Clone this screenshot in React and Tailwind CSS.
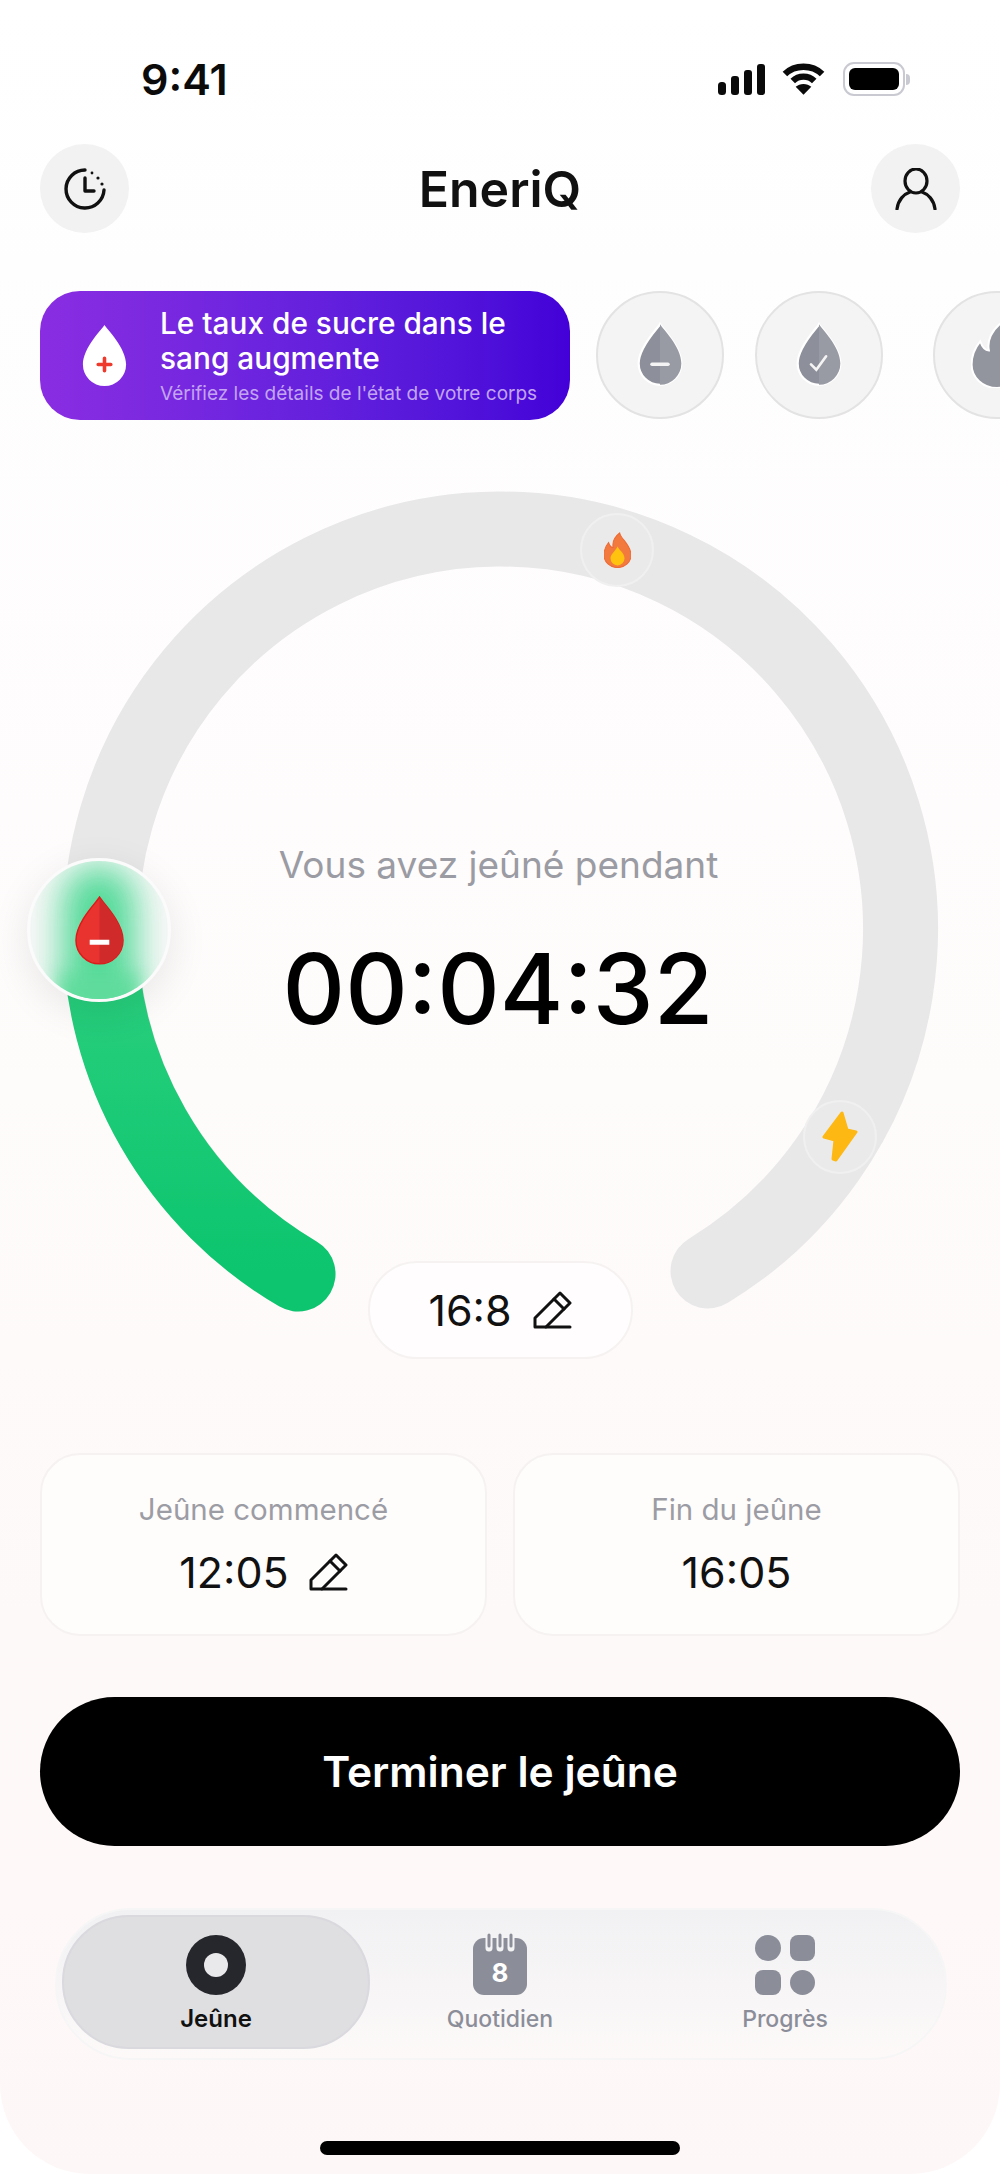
import React from 'react';

const DROP = 'M50 2 C54 10 98 52 98 90 A48 48 0 0 1 2 90 C2 52 46 10 50 2 Z';
const FLAME = 'M58 2 C62 24 100 46 100 84 A50 46 0 0 1 0 84 C0 66 7 50 17 38 C21 50 27 56 34 56 C30 36 40 16 58 2 Z';

const Pencil = ({ className }) => (
    <svg viewBox="0 0 40 38" fill="none" stroke="#111" strokeWidth="3" strokeLinejoin="round" strokeLinecap="round" className={className}>
        <path d="M3 36 V27 L28 2 L38 12 L14 36 H3 Z" />
        <path d="M22 8 L32 18" />
        <path d="M14 36 H38" />
    </svg>
);

const SplitDrop = ({ left, right, className, children }) => (
    <svg viewBox="-4 -2 108 146" className={className}>
        <path d={DROP} fill={left} stroke="#fff" strokeWidth="5" />
        <path d="M50 2 C54 10 98 52 98 90 A48 48 0 0 1 50 138 Z" fill={right} />
        {children}
    </svg>
);

const StatusBar = () => (
    <div className="flex h-[144px] items-start justify-between pl-[141px] pr-[90px] pt-[52px]">
        <span className="text-[43px] font-semibold leading-[54px] text-[#0b0b0b]">9:41</span>
        <div className="mt-[10px] flex items-center">
            <svg viewBox="0 0 48 31" className="h-[31px] w-[48px]" fill="#0a0a0a">
                <rect x="0" y="18" width="8" height="13" rx="3.5" />
                <rect x="13" y="12" width="8" height="19" rx="3" />
                <rect x="26" y="6" width="8" height="25" rx="3" />
                <rect x="39" y="0" width="8" height="31" rx="3" />
            </svg>
            <svg viewBox="0 0 44 32" className="ml-[16px] h-[32px] w-[43px]" fill="none" stroke="#0a0a0a" strokeWidth="6.5">
                <path d="M3 11 C13 1 31 1 41 11" />
                <path d="M11 18 C17 12 27 12 33 18" />
                <path d="M22 32 L14 24 C18 20 26 20 30 24 Z" fill="#0a0a0a" stroke="none" />
            </svg>
            <div className="ml-[18px] flex h-[34px] w-[62px] items-center justify-center rounded-[11px] border-[2px] border-[#c9c9d2]">
                <div className="h-[22px] w-[50px] rounded-[6px] bg-black" />
            </div>
            <div className="ml-[1px] h-[11px] w-[4px] rounded-r-full bg-[#c9c9d2]" />
        </div>
    </div>
);

const Header = () => (
    <div className="flex h-[89px] items-center justify-between px-[40px]">
        <div className="flex h-[89px] w-[89px] items-center justify-center rounded-full bg-[#f3f2f2]">
            <svg viewBox="0 0 44 44" className="h-[44px] w-[44px]" fill="none" stroke="#111" strokeWidth="3.4" strokeLinecap="round" strokeLinejoin="round">
                <path d="M22 3 A19 19 0 1 0 41 23" />
                <path d="M22 11 V24 H31" />
                <circle cx="29" cy="6" r="1.4" fill="#111" stroke="none" />
                <circle cx="35" cy="11" r="1.6" fill="#111" stroke="none" />
                <circle cx="39" cy="17" r="1.6" fill="#111" stroke="none" />
            </svg>
        </div>
        <span className="text-[50px] font-semibold leading-none text-[#111]">EneriQ</span>
        <div className="flex h-[89px] w-[89px] items-center justify-center rounded-full bg-[#f3f2f2]">
            <svg viewBox="0 0 42 42" className="h-[42px] w-[42px]" fill="none" stroke="#111" strokeWidth="3.2" strokeLinecap="round">
                <ellipse cx="21" cy="13" rx="11" ry="12" />
                <path d="M2 41 C3 32 9 26 15 24 M40 41 C39 32 33 26 27 24" />
            </svg>
        </div>
    </div>
);

const GrayCircle = ({ className, children }) => (
    <div className={`flex h-[128px] w-[128px] shrink-0 items-center justify-center rounded-full border-[2px] border-[#e4e3e3] bg-[#f4f4f4] ${className}`}>
        {children}
    </div>
);

const Banner = () => (
    <div className="mt-[58px] flex h-[129px] overflow-hidden pl-[40px]">
        <div className="flex h-[129px] w-[530px] shrink-0 items-center rounded-[40px] bg-gradient-to-r from-[#8a2de2] to-[#4300d8] pl-[41px]">
            <svg viewBox="0 0 100 140" className="h-[63px] w-[47px] shrink-0">
                <path d={DROP} fill="#fff" />
                <path d="M50 76 V104 M36 90 H64" stroke="#ee3a2c" strokeWidth="8" strokeLinecap="round" />
            </svg>
            <div className="ml-[32px] whitespace-nowrap text-white">
                <div className="text-[29.8px] font-medium leading-[35px]">Le taux de sucre dans le<br />sang augmente</div>
                <div className="mt-[7px] text-[19px] leading-[22px] text-[#c3a5f2]">Vérifiez les détails de l'état de votre corps</div>
            </div>
        </div>
        <GrayCircle className="ml-[26px]">
            <SplitDrop left="#8d909a" right="#989aa4" className="h-[66px] w-[48px]">
                <path d="M32 92 H68" stroke="#f4f4f4" strokeWidth="8" strokeLinecap="round" />
            </SplitDrop>
        </GrayCircle>
        <GrayCircle className="ml-[31px]">
            <SplitDrop left="#8d909a" right="#989aa4" className="h-[66px] w-[48px]">
                <path d="M32 92 L44 104 L66 74" fill="none" stroke="#f4f4f4" strokeWidth="6" strokeLinecap="round" />
            </SplitDrop>
        </GrayCircle>
        <GrayCircle className="ml-[50px]">
            <svg viewBox="0 0 100 130" className="h-[66px] w-[52px]">
                <path d={FLAME} fill="#92949e" stroke="#fff" strokeWidth="4" />
            </svg>
        </GrayCircle>
    </div>
);

const Badge = ({ className, children }) => (
    <div className={`absolute flex h-[74px] w-[74px] items-center justify-center rounded-full border-[2px] border-[#f1f0f0] bg-[#ebeaea] ${className}`}>
        {children}
    </div>
);

const Ring = () => (
    <div className="relative flex h-[940px] flex-col items-center pb-[1px]">
        <svg viewBox="0 420 1000 940" className="absolute inset-0 h-[940px] w-[1000px]" fill="none" strokeLinecap="round">
            <defs>
                <linearGradient id="greenArc" x1="0" y1="930" x2="0" y2="1274" gradientUnits="userSpaceOnUse">
                    <stop offset="0" stopColor="#2dd07f" />
                    <stop offset="1" stopColor="#0cc56e" />
                </linearGradient>
            </defs>
            <path d="M298 1274 A400 400 0 1 1 708 1271" stroke="#e9e8e8" strokeWidth="75" />
            <path d="M298 1274 A400 400 0 0 1 100 929" stroke="url(#greenArc)" strokeWidth="75" />
        </svg>

        <Badge className="left-[580px] top-[93px]">
            <svg viewBox="0 0 100 130" className="h-[36px] w-[27px]">
                <path d={FLAME} fill="#f27a3e" stroke="#ee6a35" strokeWidth="4" />
                <path d="M50 52 C56 66 76 76 76 96 A26 26 0 0 1 24 96 C24 80 42 70 50 52 Z" fill="#ffc20e" />
            </svg>
        </Badge>
        <Badge className="left-[803px] top-[680px]">
            <svg viewBox="0 0 36 52" className="h-[52px] w-[36px]">
                <path d="M20 2 L25 19 L34 21 L14 49 L11 48 L13 29 L2 26 Z" fill="#fdb813" stroke="#fdb813" strokeWidth="3" strokeLinejoin="round" />
            </svg>
        </Badge>

        {/* knob on the ring */}
        <div className="absolute left-[27px] top-[438px] h-[144px] w-[144px] overflow-hidden rounded-full border-[3px] border-[#fbfbfb] bg-[#f8f8f8] shadow-[0_10px_40px_rgba(0,0,0,0.09)]">
            <div className="absolute left-[32px] top-[4px] h-[160px] w-[74px] rounded-full bg-[#3fd68d] opacity-90 blur-[18px]" />
            <div className="absolute bottom-[-14px] left-[30px] h-[40px] w-[78px] bg-[#5fdc9c] blur-[10px]" />
            <svg viewBox="0 0 100 140" className="absolute left-[45px] top-[35px] h-[69px] w-[49px]">
                <path d={DROP} fill="#e8332f" stroke="#e01818" strokeWidth="3" />
                <path d="M50 2 C54 10 98 52 98 90 A48 48 0 0 1 50 138 Z" fill="#d02a2a" />
                <path d="M30 94 H70" stroke="#fff" strokeWidth="10" />
            </svg>
        </div>

        <div className="relative mt-[423px] pr-[3px] text-[37px] leading-[44px] text-[#9a9ba3]">Vous avez jeûné pendant</div>
        <div className="relative mt-[47px] pr-[4px] text-[97px] font-medium leading-[110px] text-black">00:04:32</div>

        <div className="relative mt-auto flex h-[98px] w-[265px] items-center justify-center rounded-full border-[2px] border-[#f6f2f2] bg-[#fffdfd]">
            <span className="text-[43px] leading-none text-[#111]">16:8</span>
            <Pencil className="ml-[20px] h-[38px] w-[40px]" />
        </div>
    </div>
);

const TimeCard = ({ label, value, editable }) => (
    <div className="flex h-[183px] flex-col items-center rounded-[40px] border-[2px] border-[#f6f2f2] bg-[#fffcfc] pt-[35px]">
        <span className="text-[29.5px] leading-[38px] text-[#9c9da4]">{label}</span>
        <div className="mt-[22px] flex h-[44px] items-center">
            <span className="text-[43px] leading-none text-[#111]">{value}</span>
            {editable && <Pencil className="ml-[19px] h-[38px] w-[40px]" />}
        </div>
    </div>
);

const TabLabel = ({ active, children }) => (
    <span className={`mt-[9px] leading-[30px] ${active ? 'text-[24px] font-semibold text-[#111]' : 'text-[23px] font-medium text-[#8b8e99]'}`}>{children}</span>
);

const TabBar = () => (
    <div className="ml-[55px] mr-[53px] mt-[62px] flex h-[152px] rounded-full border-[2px] border-[#f7f6f6] bg-gradient-to-b from-[#f1f1f3] to-[#fdf9f9] p-[5px]">
        <div className="flex h-[134px] w-[308px] flex-col items-center rounded-full border-[2px] border-[#d9d9de] bg-[#dfdfe2] pt-[18px]">
            <div className="flex h-[60px] w-[60px] items-center justify-center rounded-full bg-[#26272c]">
                <div className="h-[24px] w-[24px] rounded-full bg-[#e9e9ec]" />
            </div>
            <TabLabel active>Jeûne</TabLabel>
        </div>
        <div className="flex w-[260px] flex-col items-center pt-[18px]">
            <svg viewBox="0 0 54 62" className="h-[62px] w-[54px]">
                <rect x="0" y="5" width="54" height="57" rx="11" fill="#8b8e99" />
                <g stroke="#f3f3f4" strokeWidth="7" strokeLinecap="round">
                    <path d="M16 3 V15" />
                    <path d="M27 3 V15" />
                    <path d="M38 3 V15" />
                </g>
                <g stroke="#8b8e99" strokeWidth="3" strokeLinecap="round">
                    <path d="M16 2 V13" />
                    <path d="M27 2 V13" />
                    <path d="M38 2 V13" />
                </g>
                <text x="27" y="49" textAnchor="middle" fontSize="26" fontWeight="700" fontFamily="Inter, sans-serif" fill="#fff">8</text>
            </svg>
            <TabLabel>Quotidien</TabLabel>
        </div>
        <div className="flex flex-1 flex-col items-center pt-[20px]">
            <div className="grid h-[60px] w-[60px] grid-cols-2 gap-[9px]">
                <div className="rounded-full bg-[#8b8e99]" />
                <div className="rounded-[8px] bg-[#8b8e99]" />
                <div className="rounded-[8px] bg-[#8b8e99]" />
                <div className="rounded-full bg-[#8b8e99]" />
            </div>
            <TabLabel>Progrès</TabLabel>
        </div>
    </div>
);

export default function App() {
    return (
        <div className="h-[2174px] w-[1000px] overflow-hidden bg-white font-['Inter',sans-serif]">
            <div className="h-[2174px] rounded-b-[90px] bg-gradient-to-b from-white via-[#fefbfb] to-[#fef7f7]">
                <StatusBar />
                <Header />
                <Banner />
                <Ring />
                <div className="mt-[93px] grid grid-cols-2 gap-[26px] px-[40px]">
                    <TimeCard label="Jeûne commencé" value="12:05" editable />
                    <TimeCard label="Fin du jeûne" value="16:05" />
                </div>
                <div className="mx-[40px] mt-[61px] flex h-[149px] items-center justify-center rounded-full bg-black text-[42.5px] font-semibold text-white">
                    Terminer le jeûne
                </div>
                <TabBar />
                <div className="mx-auto mt-[81px] h-[14px] w-[360px] rounded-full bg-black" />
            </div>
        </div>
    );
}
